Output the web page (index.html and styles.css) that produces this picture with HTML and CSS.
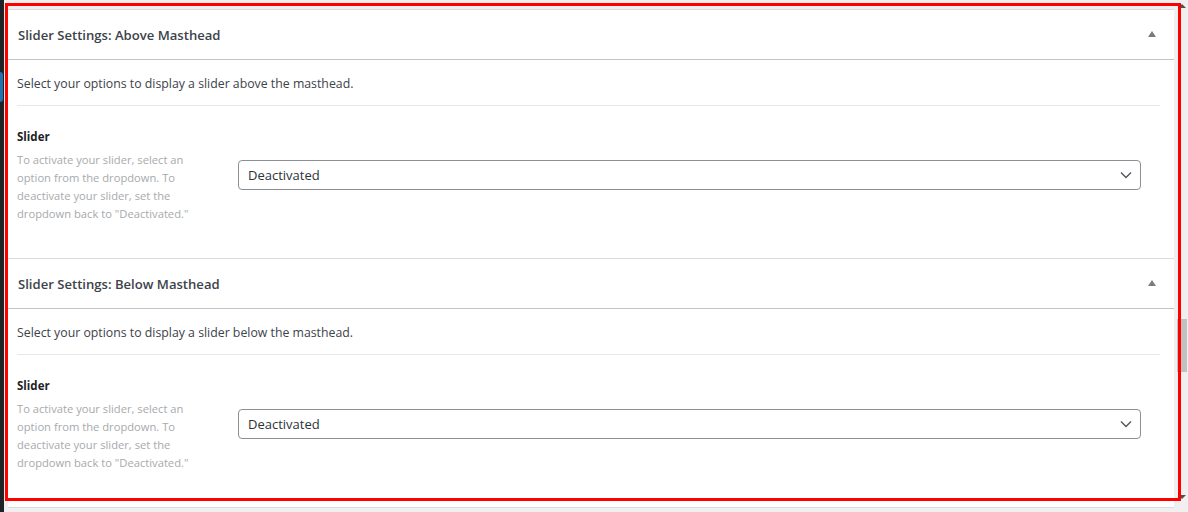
FILE: index.html
```html
<!DOCTYPE html>
<html lang="en">
<head>
<meta charset="UTF-8">
<title>Slider Settings</title>
<link rel="stylesheet" href="styles.css">
</head>
<body>

<div class="screen">
  <div class="menu-edge"><span class="menu-mark"></span></div>

  <main class="content">
    <div class="panel">

      <section class="box">
        <div class="box-head">
          <h2>Slider Settings: Above Masthead</h2>
          <span class="toggle"></span>
        </div>
        <div class="box-body">
          <p class="intro">Select your options to display a slider above the masthead.</p>
          <div class="field">
            <div class="field-label">
              <h3>Slider</h3>
              <p class="hint">To activate your slider, select an option from the dropdown. To deactivate your slider, set the dropdown back to "Deactivated."</p>
            </div>
            <div class="select">
              <span>Deactivated</span>
              <svg width="12" height="8" viewBox="0 0 12 8"><path d="M1 1.5 L6 6.5 L11 1.5" fill="none" stroke="#50575e" stroke-width="1.4"/></svg>
            </div>
          </div>
        </div>
      </section>

      <section class="box">
        <div class="box-head">
          <h2>Slider Settings: Below Masthead</h2>
          <span class="toggle"></span>
        </div>
        <div class="box-body">
          <p class="intro">Select your options to display a slider below the masthead.</p>
          <div class="field">
            <div class="field-label">
              <h3>Slider</h3>
              <p class="hint">To activate your slider, select an option from the dropdown. To deactivate your slider, set the dropdown back to "Deactivated."</p>
            </div>
            <div class="select">
              <span>Deactivated</span>
              <svg width="12" height="8" viewBox="0 0 12 8"><path d="M1 1.5 L6 6.5 L11 1.5" fill="none" stroke="#50575e" stroke-width="1.4"/></svg>
            </div>
          </div>
        </div>
      </section>

    </div>
  </main>

  <div class="scrollbar">
    <span class="arrow up"></span>
    <span class="thumb"></span>
    <span class="arrow down"></span>
  </div>
</div>

<div class="highlight"></div>

</body>
</html>
```

FILE: styles.css
```css
body { margin:0; background:#f0f0f1; font-family:"Open Sans", "Noto Sans", sans-serif; color:#3c434a; }
h2, h3, p { margin:0; }

.screen { display:flex; height:512px; overflow:hidden; }
.menu-edge { width:4px; background:#1d2327; flex-shrink:0; }
.menu-mark { display:block; width:3px; height:30px; margin-top:72px; background:#2271b1; border-radius:0 3px 3px 0; }

.content { flex:1; padding:9px 1px 0 4px; }
.panel { background:#fff; border-top:1px solid #dcdcde; }

.box { border-bottom:1px solid #dcdcde; }
.box-head { height:49px; display:flex; align-items:center; justify-content:space-between; padding:0 18px 0 10px; border-bottom:1px solid #c3c4c7; }
.box-head h2 { font-size:13.1px; font-weight:600; color:#3c434a; }
.toggle { width:0; height:0; border-left:4px solid transparent; border-right:4px solid transparent; border-bottom:6px solid #787c82; margin-top:-2px; }

.box-body { padding:0 14px 0 9px; }
.intro { height:45px; line-height:47px; font-size:12.3px; color:#3c434a; border-bottom:1px solid #e8e8e8; }

.field { display:grid; grid-template-columns:180px 1fr; column-gap:41px; padding:22px 19px 35px 0; }
.field-label h3 { font-size:11.5px; font-weight:700; color:#1d2327; line-height:18px; }
.hint { margin-top:5px; width:182px; font-size:11.2px; line-height:18px; color:#a7aaad; }

.select { margin-top:32px; height:28px; border:1px solid #8c8f94; border-radius:4px; display:flex; align-items:center; justify-content:space-between; padding:0 8px 0 9px; }
.select span { font-size:13px; color:#2c3338; }

.scrollbar { width:13px; flex-shrink:0; background:#f0f0f0; display:flex; flex-direction:column; align-items:center; padding-top:4px; }
.arrow { width:0; height:0; border-left:4px solid transparent; border-right:4px solid transparent; }
.arrow.up { border-bottom:4px solid #505050; }
.arrow.down { border-top:4px solid #505050; margin-top:123px; }
.thumb { width:10px; height:53px; margin-top:311px; background:#c1c1c1; }

.highlight { position:absolute; left:5px; top:3px; width:1170px; height:492px; border:3px solid #f00; pointer-events:none; }
```
